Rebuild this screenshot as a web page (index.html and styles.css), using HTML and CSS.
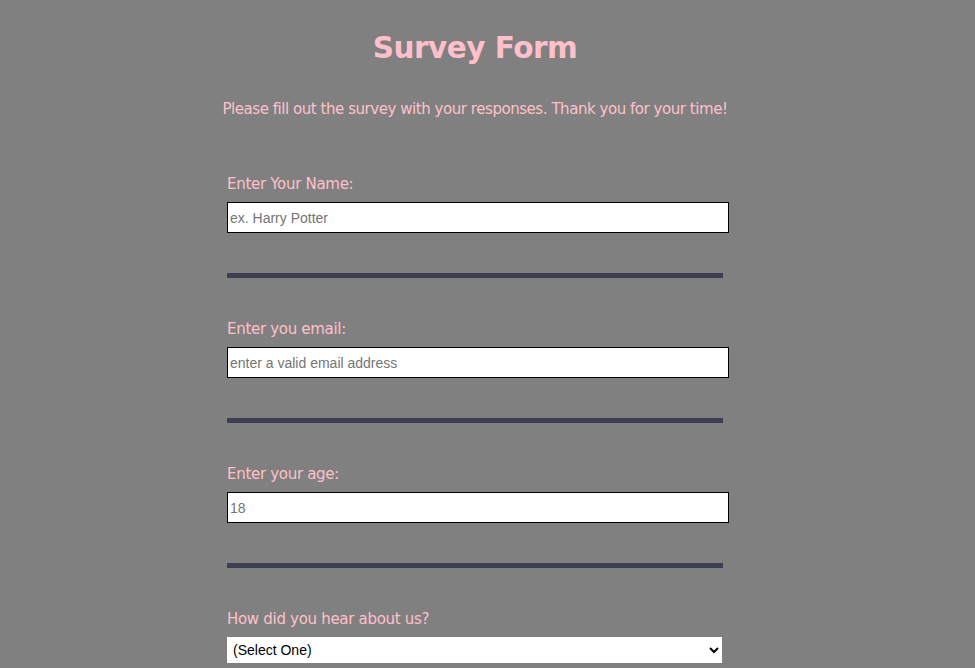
FILE: index.html
```html
<!DOCTYPE html>
<html>
<head>
<meta charset="utf-8">
<link rel="stylesheet" href="styles.css">
</head>
<body>
<div class="page">
  <h1 class="title">Survey Form</h1>
  <p class="description">Please fill out the survey with your responses. Thank you for your time!</p>
  <form class="survey">
    <div class="field">
      <label class="label" for="name">Enter Your Name:</label>
      <input class="text-input" id="name" type="text" placeholder="ex. Harry Potter">
    </div>
    <hr class="divider">
    <div class="field">
      <label class="label" for="email">Enter you email:</label>
      <input class="text-input" id="email" type="email" placeholder="enter a valid email address">
    </div>
    <hr class="divider">
    <div class="field">
      <label class="label" for="age">Enter your age:</label>
      <input class="text-input" id="age" type="number" placeholder="18">
    </div>
    <hr class="divider">
    <div class="field">
      <label class="label" for="source">How did you hear about us?</label>
      <select class="select" id="source">
        <option>(Select One)</option>
        <option>Friend</option>
        <option>Internet</option>
      </select>
    </div>
  </form>
</div>
</body>
</html>
```
FILE: styles.css
```css
html, body {
  margin: 0;
  padding: 0;
  background: #808080;
}
body {
  font-family: "DejaVu Sans", Verdana, sans-serif;
  color: #ffc0cb;
}
.page {
  width: 950px;
  padding-top: 28px;
}
.title {
  margin: 0;
  text-align: center;
  font-size: 29.5px;
  font-weight: bold;
  line-height: 40px;
  letter-spacing: -0.5px;
}
.description {
  margin: 31px 0 0;
  text-align: center;
  font-size: 15px;
  line-height: 20px;
  letter-spacing: -0.45px;
}
.survey {
  width: 502px;
  margin: 55px 0 0 227px;
}
.field {
  display: flex;
  flex-direction: column;
  align-items: flex-start;
}
.label {
  font-size: 15px;
  line-height: 20px;
  letter-spacing: -0.3px;
  margin-bottom: 8px;
}
.text-input {
  box-sizing: border-box;
  width: 502px;
  height: 31px;
  margin: 0;
  border: 1px solid #000;
  background: #fff;
  padding: 0 2px;
  font-family: "Liberation Sans", Arial, sans-serif;
  font-size: 14px;
  color: #000;
}
.text-input::placeholder {
  color: #757575;
}
.text-input::-webkit-outer-spin-button,
.text-input::-webkit-inner-spin-button {
  -webkit-appearance: none;
  margin: 0;
}
.divider {
  box-sizing: border-box;
  width: 496px;
  height: 5px;
  margin: 40px 0 41px;
  border: 0;
  background: #3e3e52;
}
.select {
  box-sizing: border-box;
  width: 495px;
  height: 26px;
  margin: 0;
  border: 0;
  border-radius: 0;
  background: #fff;
  font-family: "Liberation Sans", Arial, sans-serif;
  font-size: 14px;
  color: #000;
  padding: 0 2px;
}
```
